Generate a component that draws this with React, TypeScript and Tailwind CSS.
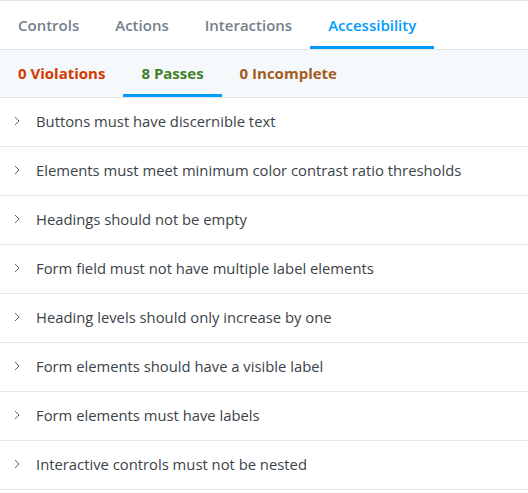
import React from 'react';

const rules = [
  'Buttons must have discernible text',
  'Elements must meet minimum color contrast ratio thresholds',
  'Headings should not be empty',
  'Form field must not have multiple label elements',
  'Heading levels should only increase by one',
  'Form elements should have a visible label',
  'Form elements must have labels',
  'Interactive controls must not be nested',
];

const tabs = ['Controls', 'Actions', 'Interactions', 'Accessibility'];

const Chevron = () => (
  <svg width="8" height="10" viewBox="0 0 8 10" className="shrink-0">
    <path d="M1 1l4 4-4 4" fill="none" stroke="#5c6870" strokeWidth="1" />
  </svg>
);

export default function App() {
  return (
    <div
      className="w-[528px] h-[493px] bg-white overflow-hidden border-t border-[#e3e6e8]"
      style={{ fontFamily: '"Open Sans", sans-serif' }}
    >
      {/* top tabs */}
      <div className="flex h-[49px] border-b border-[#e3e6e8]">
        {tabs.map((t) => {
          const active = t === 'Accessibility';
          return (
            <div
              key={t}
              className={`relative flex items-center px-[18px] text-[15px] font-semibold ${
                active ? 'text-[#029cfd]' : 'text-[#73828c]'
              }`}
            >
              {t}
              {active && <div className="absolute left-0 right-0 bottom-0 h-[3px] bg-[#029cfd]" />}
            </div>
          );
        })}
      </div>

      {/* result tabs */}
      <div className="flex h-[48px] bg-[#f6f9fc] border-b border-[#e3e6e8]">
        <div className="flex items-center px-[18px] pb-[1px] text-[15px] font-bold text-[#d43900]">0 Violations</div>
        <div className="relative flex items-center px-[18px] pb-[1px] text-[15px] font-bold text-[#448028]">
          8 Passes
          <div className="absolute left-0 right-0 bottom-0 h-[3px] bg-[#029cfd]" />
        </div>
        <div className="flex items-center px-[18px] pb-[1px] text-[15px] font-bold text-[#a15c20]">0 Incomplete</div>
      </div>

      {/* rules */}
      <div>
        {rules.map((r) => (
          <div
            key={r}
            className="flex items-center h-[49px] pl-[14px] gap-[14px] pb-[2px] border-b border-[#e6e9ec] text-[14.8px] text-[#3b4348]"
          >
            <Chevron />
            <span>{r}</span>
          </div>
        ))}
      </div>
    </div>
  );
}
